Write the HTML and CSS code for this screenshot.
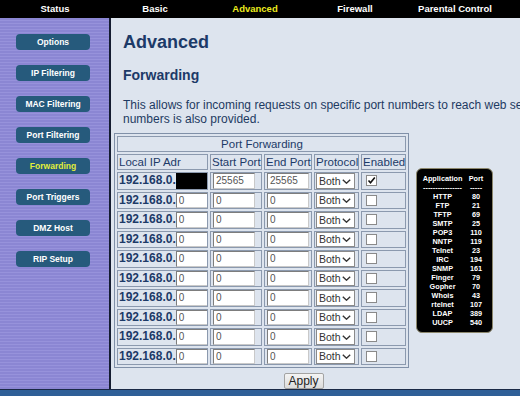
FILE: index.html
```html
<!DOCTYPE html>
<html lang="en">
<head>
    <meta charset="UTF-8">
    <meta name="viewport" content="width=device-width, initial-scale=1.0">
    <title>Advanced - Forwarding</title>
    <link rel="stylesheet" href="styles.css">
</head>
<body>
<div class="page">
    <nav class="topnav">
        <a href="#">Status</a>
        <a href="#">Basic</a>
        <a href="#" class="active">Advanced</a>
        <a href="#">Firewall</a>
        <a href="#">Parental Control</a>
    </nav>

    <div class="main">
        <aside class="sidebar">
            <a href="#" class="side-btn">Options</a>
            <a href="#" class="side-btn">IP Filtering</a>
            <a href="#" class="side-btn">MAC Filtering</a>
            <a href="#" class="side-btn">Port Filtering</a>
            <a href="#" class="side-btn active">Forwarding</a>
            <a href="#" class="side-btn">Port Triggers</a>
            <a href="#" class="side-btn">DMZ Host</a>
            <a href="#" class="side-btn">RIP Setup</a>
        </aside>

        <section class="content">
            <h1>Advanced</h1>
            <h2>Forwarding</h2>
            <p class="intro">This allows for incoming requests on specific port numbers to reach web servers. A list of common port<br>numbers is also provided.</p>

            <form class="fwd-form">
                <div class="fwd-wrap">
                    <table class="fwd-table">
                        <colgroup>
                            <col class="c-ip"><col class="c-start"><col class="c-end"><col class="c-proto"><col class="c-on">
                        </colgroup>
                        <tr><th colspan="5" class="title">Port Forwarding</th></tr>
                        <tr class="head">
                            <th>Local IP Adr</th><th>Start Port</th><th>End Port</th><th>Protocol</th><th>Enabled</th>
                        </tr>
                        <tr>
                            <td><b>192.168.0.</b><input class="oct hidden" value=""></td>
                            <td><input class="port" value="25565"></td>
                            <td><input class="port" value="25565"></td>
                            <td><span class="sel"><select><option>Both</option><option>TCP</option><option>UDP</option></select><svg viewBox="0 0 9 5" width="9" height="5"><path d="M0.8 0.8 L4.5 4.2 L8.2 0.8" fill="none" stroke="#333" stroke-width="1.4"/></svg></span></td>
                            <td><span class="chk on"><svg viewBox="0 0 9 9" width="9" height="9"><path d="M1.5 4.5 L3.5 6.8 L7.8 1.5" fill="none" stroke="#111" stroke-width="1.6"/></svg></span></td>
                        </tr>
                        <tr>
                            <td><b>192.168.0.</b><input class="oct" value="0"></td>
                            <td><input class="port" value="0"></td>
                            <td><input class="port" value="0"></td>
                            <td><span class="sel"><select><option>Both</option><option>TCP</option><option>UDP</option></select><svg viewBox="0 0 9 5" width="9" height="5"><path d="M0.8 0.8 L4.5 4.2 L8.2 0.8" fill="none" stroke="#333" stroke-width="1.4"/></svg></span></td>
                            <td><span class="chk"></span></td>
                        </tr>
                        <tr>
                            <td><b>192.168.0.</b><input class="oct" value="0"></td>
                            <td><input class="port" value="0"></td>
                            <td><input class="port" value="0"></td>
                            <td><span class="sel"><select><option>Both</option><option>TCP</option><option>UDP</option></select><svg viewBox="0 0 9 5" width="9" height="5"><path d="M0.8 0.8 L4.5 4.2 L8.2 0.8" fill="none" stroke="#333" stroke-width="1.4"/></svg></span></td>
                            <td><span class="chk"></span></td>
                        </tr>
                        <tr>
                            <td><b>192.168.0.</b><input class="oct" value="0"></td>
                            <td><input class="port" value="0"></td>
                            <td><input class="port" value="0"></td>
                            <td><span class="sel"><select><option>Both</option><option>TCP</option><option>UDP</option></select><svg viewBox="0 0 9 5" width="9" height="5"><path d="M0.8 0.8 L4.5 4.2 L8.2 0.8" fill="none" stroke="#333" stroke-width="1.4"/></svg></span></td>
                            <td><span class="chk"></span></td>
                        </tr>
                        <tr>
                            <td><b>192.168.0.</b><input class="oct" value="0"></td>
                            <td><input class="port" value="0"></td>
                            <td><input class="port" value="0"></td>
                            <td><span class="sel"><select><option>Both</option><option>TCP</option><option>UDP</option></select><svg viewBox="0 0 9 5" width="9" height="5"><path d="M0.8 0.8 L4.5 4.2 L8.2 0.8" fill="none" stroke="#333" stroke-width="1.4"/></svg></span></td>
                            <td><span class="chk"></span></td>
                        </tr>
                        <tr>
                            <td><b>192.168.0.</b><input class="oct" value="0"></td>
                            <td><input class="port" value="0"></td>
                            <td><input class="port" value="0"></td>
                            <td><span class="sel"><select><option>Both</option><option>TCP</option><option>UDP</option></select><svg viewBox="0 0 9 5" width="9" height="5"><path d="M0.8 0.8 L4.5 4.2 L8.2 0.8" fill="none" stroke="#333" stroke-width="1.4"/></svg></span></td>
                            <td><span class="chk"></span></td>
                        </tr>
                        <tr>
                            <td><b>192.168.0.</b><input class="oct" value="0"></td>
                            <td><input class="port" value="0"></td>
                            <td><input class="port" value="0"></td>
                            <td><span class="sel"><select><option>Both</option><option>TCP</option><option>UDP</option></select><svg viewBox="0 0 9 5" width="9" height="5"><path d="M0.8 0.8 L4.5 4.2 L8.2 0.8" fill="none" stroke="#333" stroke-width="1.4"/></svg></span></td>
                            <td><span class="chk"></span></td>
                        </tr>
                        <tr>
                            <td><b>192.168.0.</b><input class="oct" value="0"></td>
                            <td><input class="port" value="0"></td>
                            <td><input class="port" value="0"></td>
                            <td><span class="sel"><select><option>Both</option><option>TCP</option><option>UDP</option></select><svg viewBox="0 0 9 5" width="9" height="5"><path d="M0.8 0.8 L4.5 4.2 L8.2 0.8" fill="none" stroke="#333" stroke-width="1.4"/></svg></span></td>
                            <td><span class="chk"></span></td>
                        </tr>
                        <tr>
                            <td><b>192.168.0.</b><input class="oct" value="0"></td>
                            <td><input class="port" value="0"></td>
                            <td><input class="port" value="0"></td>
                            <td><span class="sel"><select><option>Both</option><option>TCP</option><option>UDP</option></select><svg viewBox="0 0 9 5" width="9" height="5"><path d="M0.8 0.8 L4.5 4.2 L8.2 0.8" fill="none" stroke="#333" stroke-width="1.4"/></svg></span></td>
                            <td><span class="chk"></span></td>
                        </tr>
                        <tr>
                            <td><b>192.168.0.</b><input class="oct" value="0"></td>
                            <td><input class="port" value="0"></td>
                            <td><input class="port" value="0"></td>
                            <td><span class="sel"><select><option>Both</option><option>TCP</option><option>UDP</option></select><svg viewBox="0 0 9 5" width="9" height="5"><path d="M0.8 0.8 L4.5 4.2 L8.2 0.8" fill="none" stroke="#333" stroke-width="1.4"/></svg></span></td>
                            <td><span class="chk"></span></td>
                        </tr>
                    </table>

                    <div class="ports-box">
                        <span>Application</span><span>Port</span>
                        <span>----------------</span><span>-----</span>
                        <span>HTTP</span><span>80</span>
                        <span>FTP</span><span>21</span>
                        <span>TFTP</span><span>69</span>
                        <span>SMTP</span><span>25</span>
                        <span>POP3</span><span>110</span>
                        <span>NNTP</span><span>119</span>
                        <span>Telnet</span><span>23</span>
                        <span>IRC</span><span>194</span>
                        <span>SNMP</span><span>161</span>
                        <span>Finger</span><span>79</span>
                        <span>Gopher</span><span>70</span>
                        <span>Whois</span><span>43</span>
                        <span>rtelnet</span><span>107</span>
                        <span>LDAP</span><span>389</span>
                        <span>UUCP</span><span>540</span>
                    </div>
                </div>
                <div class="actions">
                    <button type="button" class="apply">Apply</button>
                </div>
            </form>
        </section>
    </div>

    <div class="footer-bar"></div>
</div>
</body>
</html>
```

FILE: styles.css
```css
body {
    margin: 0;
    font-family: "Liberation Sans", Arial, sans-serif;
    background: #dde4ee;
}
.page {
    width: 520px;
    height: 396px;
    overflow: hidden;
    display: flex;
    flex-direction: column;
}

/* top menu */
.topnav {
    flex: none;
    height: 18px;
    background: #000;
    display: grid;
    grid-template-columns: repeat(5, 100px);
    padding-left: 5px;
}
.topnav a {
    color: #fff;
    font-size: 9.5px;
    font-weight: bold;
    line-height: 18px;
    text-align: center;
    text-decoration: none;
}
.topnav a.active {
    color: #ecec1e;
}

.main {
    flex: 1;
    min-height: 0;
    display: flex;
}

/* left menu */
.sidebar {
    flex: none;
    width: 109px;
    border-right: 2px solid #141c30;
    background: repeating-linear-gradient(#8b86d3 0 2px, #9792db 2px 3px);
    padding-top: 16px;
    display: flex;
    flex-direction: column;
    align-items: flex-start;
    gap: 15px;
}
.side-btn {
    margin-left: 16px;
    width: 74px;
    height: 16px;
    line-height: 16px;
    border-radius: 4px;
    background: #265a7c;
    color: #fff;
    font-size: 8.5px;
    font-weight: bold;
    text-align: center;
    text-decoration: none;
}
.side-btn.active {
    color: #e2ee3a;
}

/* page content */
.content {
    flex: 1;
    min-width: 0;
    overflow: hidden;
    padding: 13px 0 0 12px;
    color: #1c3a68;
}
h1 {
    margin: 0;
    font-size: 18px;
    line-height: 22px;
}
h2 {
    margin: 13px 0 0;
    font-size: 14px;
    line-height: 18px;
}
.intro {
    margin: 14px 0 0;
    font-size: 12px;
    line-height: 14px;
    white-space: nowrap;
    color: #1e3a62;
}

.fwd-form {
    width: 379px;
    margin: 7px 0 0 -9px;
}
.fwd-wrap {
    display: flex;
    align-items: center;
    gap: 7px;
}

.fwd-table {
    flex: none;
    width: 295px;
    table-layout: fixed;
    border: 1px solid #8090a8;
    border-spacing: 2px;
    font-size: 12px;
    color: #1c3a68;
}
.c-ip { width: 91px; }
.c-start { width: 52px; }
.c-end { width: 48px; }
.c-proto { width: 45px; }
.c-on { width: 45px; }

.fwd-table th,
.fwd-table td {
    border: 1px solid #8b99ae;
    white-space: nowrap;
}
.fwd-table th {
    padding: 0 0 0 1px;
    font-size: 11.5px;
    font-weight: normal;
    text-align: left;
    line-height: 14px;
}
.fwd-table th.title {
    text-align: center;
}
.fwd-table td {
    height: 15.5px;
    padding: 0 1px;
    line-height: 15.5px;
    vertical-align: top;
    overflow: hidden;
}
.fwd-table td > * {
    vertical-align: top;
}
.fwd-table input {
    box-sizing: border-box;
    height: 15.5px;
    margin: 0;
    padding: 0 2px;
    border: 1px solid;
    border-color: #7d7d7d #c9c9c9 #c9c9c9 #7d7d7d;
    background: #fff;
    font: 10px "Liberation Sans", Arial, sans-serif;
    color: #555;
}
.fwd-table input.oct {
    width: 32px;
}
.fwd-table input.hidden {
    background: #000;
    border-color: #000;
}
.fwd-table input.port {
    width: 42px;
    margin-left: 1px;
}

.sel {
    position: relative;
    display: inline-block;
    height: 15.5px;
}
.sel select {
    display: block;
    appearance: none;
    box-sizing: border-box;
    width: 39px;
    height: 15.5px;
    margin: 0;
    padding: 0 0 0 2px;
    border: 1px solid #8a8a8a;
    border-radius: 0;
    background: #fff;
    font: 10.5px "Liberation Sans", Arial, sans-serif;
    color: #333;
}
.sel svg {
    position: absolute;
    right: 4px;
    top: 5.5px;
    pointer-events: none;
}

.chk {
    display: inline-block;
    box-sizing: border-box;
    width: 11px;
    height: 11px;
    margin: 2px 0 0 3px;
    border: 1px solid #8a8a8a;
    background: #fff;
}
.chk svg {
    display: block;
}

/* common ports list */
.ports-box {
    flex: none;
    box-sizing: border-box;
    width: 77px;
    padding: 5px 5px 5px 3px;
    border: 1px solid #8c876c;
    border-radius: 6px;
    background: #000;
    color: #fff;
    display: grid;
    grid-template-columns: 45px 22px;
    font-size: 7.3px;
    font-weight: bold;
    line-height: 9px;
    text-align: center;
    white-space: nowrap;
}

.actions {
    margin-top: 3px;
    text-align: center;
}
.apply {
    width: 40px;
    height: 16px;
    padding: 0;
    border: 1px solid #a3a3a3;
    border-radius: 2px;
    background: linear-gradient(#f4f4f4, #dcdcdc);
    font: 12px "Liberation Sans", Arial, sans-serif;
    line-height: 14px;
    color: #222;
}

.footer-bar {
    flex: none;
    height: 6px;
    border-top: 1px solid #1a2946;
    background: #2f5f97;
}
```
